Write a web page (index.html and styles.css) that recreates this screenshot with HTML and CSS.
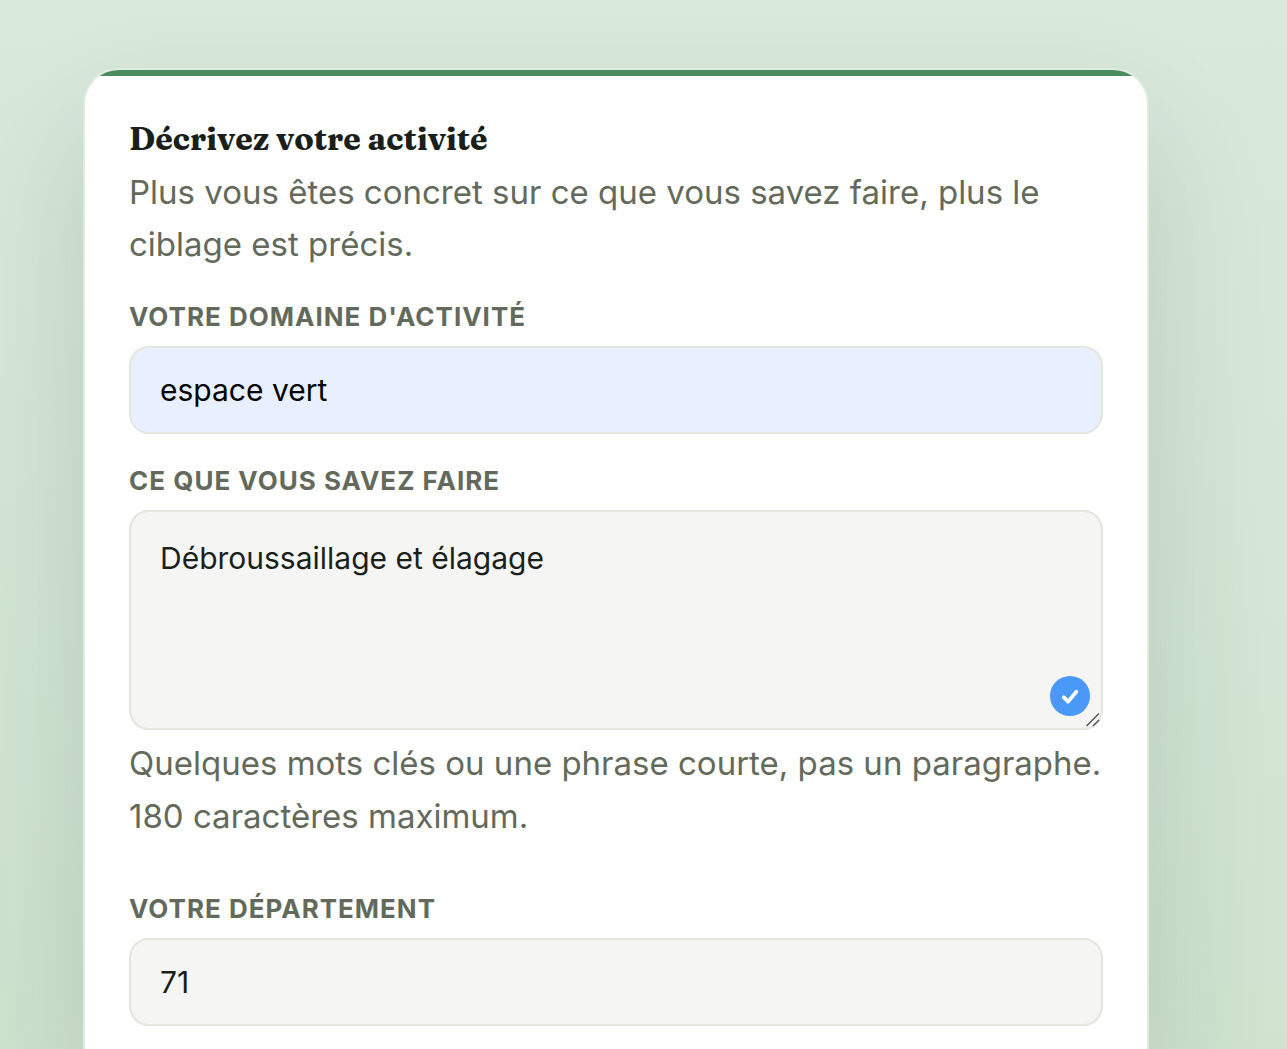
FILE: index.html
```html
<!DOCTYPE html>
<html lang="fr">
<head>
<meta charset="utf-8">
<meta name="viewport" content="width=device-width, initial-scale=1">
<title>Décrivez votre activité</title>
<link rel="stylesheet" href="styles.css">
</head>
<body>
<main class="page">
  <form class="card">
    <h1 class="title">Décrivez votre activité</h1>
    <p class="intro">Plus vous êtes concret sur ce que vous savez faire, plus le ciblage est précis.</p>
    <div class="field">
      <label class="label" for="domaine">Votre domaine d'activité</label>
      <input class="control control-filled" id="domaine" type="text" value="espace vert">
    </div>
    <div class="field">
      <label class="label" for="savoir">Ce que vous savez faire</label>
      <div class="area-wrap">
        <textarea class="control area" id="savoir" maxlength="180" spellcheck="false">Débroussaillage et élagage</textarea>
        <svg class="badge" viewBox="0 0 40 40" aria-hidden="true"><circle cx="20" cy="20" r="20" fill="#4a98f7"/><path d="M13.800 21.300l4.300 4.300 8.200-9.800" fill="none" stroke="#fff" stroke-width="3.800" stroke-linecap="round" stroke-linejoin="round"/></svg>
        <svg class="grip" viewBox="0 0 16 16" aria-hidden="true"><path d="M1.500 14L14 1.500M8 14L14 8" fill="none" stroke="#555" stroke-width="1.500"/></svg>
      </div>
      <p class="hint">Quelques mots clés ou une phrase courte, pas un paragraphe. 180 caractères maximum.</p>
    </div>
    <div class="field">
      <label class="label" for="departement">Votre département</label>
      <input class="control" id="departement" type="text" value="71">
    </div>
  </form>
</main>
</body>
</html>
```
FILE: styles.css
```css
* {
  box-sizing: border-box;
}

body {
  margin: 0;
  font-family: Inter, "Liberation Sans", sans-serif;
  color: #1b1f1b;
  background: linear-gradient(#d9e9dc, #cfe3cf) fixed;
}

.page {
  display: flex;
  min-height: 100vh;
  padding: 68px 138px 0 83px;
  overflow: hidden;
}

.card {
  flex: 1;
  min-width: 0;
  padding: 46px 44px 22px;
  border: 2px solid #dfebe1;
  border-bottom: 0;
  border-radius: 36px 36px 0 0;
  background: linear-gradient(#4a8c60 6px, #fff 6px) no-repeat;
  box-shadow: 0 60px 120px rgba(40, 65, 48, 0.16);
}

.title {
  margin: 0;
  font-family: Fraunces, "Liberation Serif", serif;
  font-size: 32px;
  line-height: 46px;
  font-weight: 700;
}

.intro,
.hint {
  font-size: 33px;
  color: #636a5c;
}

.intro {
  margin: 4px 0 32px;
  line-height: 52px;
}

.field {
  margin-bottom: 32px;
}

.field:last-child {
  margin-bottom: 0;
}

.label {
  display: block;
  margin-bottom: 14px;
  font-size: 26px;
  line-height: 30px;
  font-weight: 700;
  letter-spacing: 1px;
  text-transform: uppercase;
  color: #636a5c;
}

.control {
  display: block;
  width: 100%;
  height: 88px;
  padding: 0 29px;
  border: 2px solid #e4e5dd;
  border-radius: 20px;
  outline: 0;
  background: #f5f5f3;
  color: #1b1f1b;
  font: inherit;
  font-size: 30px;
}

.control-filled {
  background: #e8effe;
  color: #000;
}

.area-wrap {
  position: relative;
}

.area {
  height: 220px;
  padding: 22px 29px;
  line-height: 48px;
  resize: none;
}

.badge {
  position: absolute;
  right: 13px;
  bottom: 14px;
  width: 40px;
  height: 40px;
}

.grip {
  position: absolute;
  right: 2px;
  bottom: 2px;
  width: 16px;
  height: 16px;
}

.hint {
  margin: 7px 0 51px;
  line-height: 53px;
}
```
